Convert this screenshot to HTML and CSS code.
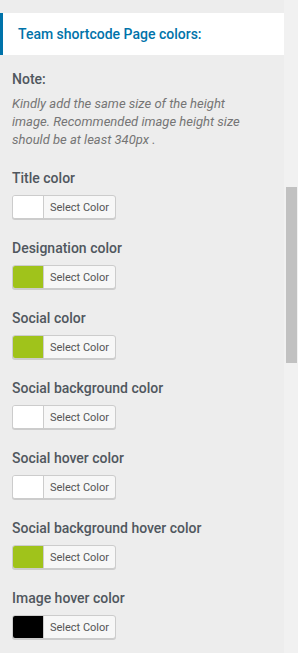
FILE: index.html
```html
<!DOCTYPE html>
<html>
<head>
<meta charset="utf-8">
<link rel="stylesheet" href="styles.css">
</head>
<body>
<div class="frame">
  <div class="panel">
    <div class="section-head">Team shortcode Page colors:</div>
    <div class="note">
      <div class="note-title">Note:</div>
      <p class="note-text">Kindly add the same size of the height image. Recommended image height size should be at least 340px .</p>
    </div>
    <div class="field">
      <div class="label">Title color</div>
      <button class="picker"><span class="swatch white"></span><span class="pick-text">Select Color</span></button>
    </div>
    <div class="field">
      <div class="label">Designation color</div>
      <button class="picker"><span class="swatch green"></span><span class="pick-text">Select Color</span></button>
    </div>
    <div class="field">
      <div class="label">Social color</div>
      <button class="picker"><span class="swatch green"></span><span class="pick-text">Select Color</span></button>
    </div>
    <div class="field">
      <div class="label">Social background color</div>
      <button class="picker"><span class="swatch white"></span><span class="pick-text">Select Color</span></button>
    </div>
    <div class="field">
      <div class="label">Social hover color</div>
      <button class="picker"><span class="swatch white"></span><span class="pick-text">Select Color</span></button>
    </div>
    <div class="field">
      <div class="label">Social background hover color</div>
      <button class="picker"><span class="swatch green"></span><span class="pick-text">Select Color</span></button>
    </div>
    <div class="field">
      <div class="label">Image hover color</div>
      <button class="picker"><span class="swatch black"></span><span class="pick-text">Select Color</span></button>
    </div>
  </div>
  <div class="scrollbar"><div class="thumb"></div></div>
</div>
</body>
</html>
```
FILE: styles.css
```css
* { box-sizing: border-box; }
html, body {
  margin: 0;
  padding: 0;
  background: #ededed;
  font-family: Roboto, "Liberation Sans", sans-serif;
  overflow: hidden;
}
.frame {
  display: flex;
  width: 298px;
  height: 653px;
}
.panel {
  width: 284px;
  flex: none;
  padding-top: 13px;
}
.section-head {
  height: 42px;
  background: #fff;
  border-left: 3px solid #0073aa;
  padding-left: 15px;
  display: flex;
  align-items: center;
  color: #0073aa;
  font-size: 14px;
  font-weight: 500;
}
.note {
  padding: 14px 12px 0 12px;
}
.note-title {
  font-size: 14px;
  line-height: 20px;
  font-weight: 500;
  color: #50575e;
}
.note-text {
  margin: 6px 0 0 0;
  font-size: 13px;
  line-height: 18px;
  font-style: italic;
  color: #757575;
  width: 245px;
}
.field {
  padding: 0 12px;
  margin-top: 19px;
  display: flex;
  flex-direction: column;
  align-items: flex-start;
}
.label {
  font-size: 14px;
  line-height: 20px;
  font-weight: 500;
  color: #50575e;
}
.picker {
  margin-top: 7px;
  height: 24px;
  width: 104px;
  display: flex;
  padding: 0;
  border: 1px solid #cccccc;
  border-radius: 3px;
  background: #f7f7f7;
  box-shadow: 0 1px 0 #cccccc;
  overflow: hidden;
  font-family: inherit;
}
.swatch {
  width: 31px;
  height: 100%;
  border-right: 1px solid #cccccc;
  flex: none;
}
.white { background: #ffffff; }
.green { background: #a0c31b; }
.black { background: #000000; }
.pick-text {
  flex: 1;
  height: 100%;
  display: flex;
  align-items: center;
  justify-content: center;
  font-size: 11px;
  color: #555555;
}
.scrollbar {
  width: 14px;
  flex: none;
  background: #f1f1f1;
  padding-top: 187px;
  padding-left: 2px;
  padding-right: 1px;
}
.thumb {
  height: 176px;
  background: #c1c1c1;
}
```
